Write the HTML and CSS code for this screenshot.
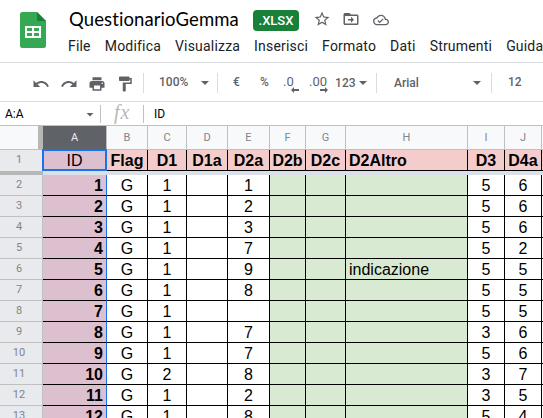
FILE: index.html
```
<!DOCTYPE html>
<html lang="it">
<head>
<meta charset="utf-8">
<title>QuestionarioGemma</title>
<link rel="stylesheet" href="styles.css">
</head>
<body>
<header class="top">
  <svg class="logo" width="26" height="36" viewBox="0 0 26 36"><path d="M2.500 0H17l9 9v24.500a2.500 2.500 0 0 1-2.500 2.500h-21A2.500 2.500 0 0 1 0 33.500v-31A2.500 2.500 0 0 1 2.500 0z" fill="#34a853"/><path d="M17 0l9 9h-9z" fill="#188038"/><path fill-rule="evenodd" fill="#fff" d="M5 14h16v12H5zM7 16v3h5v-3zM14 16v3h5v-3zM7 21v3h5v-3zM14 21v3h5v-3z"/></svg>
  <div class="head">
    <div class="titlebar">
      <span class="title">QuestionarioGemma</span>
      <span class="badge">.XLSX</span>
      <svg class="ic star" width="18" height="18" viewBox="0 0 24 24"><path d="M22 9.240l-7.190-.62L12 2 9.190 8.630 2 9.240l5.460 4.730L5.820 21 12 17.270 18.180 21l-1.630-7.030L22 9.240zM12 15.400l-3.760 2.270 1-4.280-3.320-2.880 4.380-.38L12 6.100l1.710 4.040 4.380.38-3.320 2.880 1 4.280L12 15.400z"/></svg>
      <svg class="ic move" width="18" height="18" viewBox="0 0 24 24"><path d="M20 6h-8l-2-2H4c-1.100 0-2 .9-2 2v12c0 1.100.9 2 2 2h16c1.100 0 2-.9 2-2V8c0-1.100-.9-2-2-2zm0 12H4V8h16v10zm-8-1l4-4-4-4v3H8v2h4z"/></svg>
      <svg class="ic cloud" width="16" height="16" viewBox="0 0 24 24"><path d="M19.350 10.040C18.670 6.590 15.640 4 12 4 9.110 4 6.600 5.640 5.350 8.040 2.340 8.360 0 10.910 0 14c0 3.310 2.690 6 6 6h13c2.760 0 5-2.240 5-5 0-2.640-2.050-4.780-4.650-4.960zM19 18H6c-2.210 0-4-1.790-4-4 0-2.050 1.530-3.760 3.560-3.970l1.070-.11.5-.95C8.080 7.140 9.940 6 12 6c2.620 0 4.880 1.860 5.390 4.430l.3 1.500 1.530.11c1.560.1 2.780 1.410 2.780 2.960 0 1.650-1.350 3-3 3zm-9-3.820l-2.090-2.090L6.500 13.500 10 17l6.010-6.010-1.410-1.410z"/></svg>
    </div>
    <nav class="menu"><span>File</span><span>Modifica</span><span>Visualizza</span><span>Inserisci</span><span>Formato</span><span>Dati</span><span>Strumenti</span><span>Guida</span></nav>
  </div>
</header>
<div class="toolbar">
  <svg class="ic undo" width="18" height="18" viewBox="0 0 24 24"><path d="M12.500 8c-2.650 0-5.050.99-6.900 2.600L2 7v9h9l-3.620-3.620c1.390-1.160 3.160-1.880 5.120-1.880 3.540 0 6.550 2.310 7.600 5.500l2.370-.78C21.080 11.030 17.150 8 12.500 8z"/></svg>
  <svg class="ic redo" width="18" height="18" viewBox="0 0 24 24"><path d="M18.400 10.600C16.550 8.990 14.150 8 11.500 8c-4.650 0-8.580 3.030-9.960 7.220L3.900 16c1.050-3.190 4.050-5.500 7.600-5.500 1.950 0 3.730.72 5.120 1.880L13 16h9V7l-3.600 3.600z"/></svg>
  <svg class="ic print" width="18" height="18" viewBox="0 0 24 24"><path d="M19 8H5c-1.660 0-3 1.340-3 3v6h4v4h12v-4h4v-6c0-1.660-1.340-3-3-3zm-3 11H8v-5h8v5zm3-7c-.55 0-1-.45-1-1s.45-1 1-1 1 .45 1 1-.45 1-1 1zm-1-9H6v4h12V3z"/></svg>
  <svg class="ic paint" width="18" height="18" viewBox="0 0 24 24"><path d="M18 4V3c0-.55-.45-1-1-1H5c-.55 0-1 .45-1 1v4c0 .55.45 1 1 1h12c.55 0 1-.45 1-1V6h1v4H9v11c0 .55.45 1 1 1h2c.55 0 1-.45 1-1v-9h8V4h-3z"/></svg>
  <i class="sep s1"></i>
  <span class="zoom">100%</span><i class="caret c1"></i>
  <i class="sep s2"></i>
  <span class="euro">€</span><span class="pct">%</span>
  <span class="dec d1">.0<svg width="8" height="6" viewBox="0 0 8 6"><path d="M0 3l3-3v2h5v2H3v2z"/></svg></span>
  <span class="dec d2">.00<svg width="8" height="6" viewBox="0 0 8 6"><path d="M8 3L5 0v2H0v2h5v2z"/></svg></span>
  <span class="num">123</span><i class="caret"></i>
  <i class="sep s3"></i>
  <span class="font">Arial</span><i class="caret c3"></i>
  <i class="sep s4"></i>
  <span class="size">12</span>
</div>
<div class="formula">
  <span class="range">A:A</span><i class="caret"></i><i class="fsep"></i><span class="fx">fx</span><i class="fsep short"></i><span class="value">ID</span>
</div>
<main class="sheet" id="sheet"></main>
<script src="sheet.js"></script>
</body>
</html>
```
FILE: styles.css
```
* { box-sizing: border-box; }
html, body { margin: 0; height: 100%; overflow: hidden; }
body { background: #fff; font-family: Roboto, sans-serif; color: #202124; }
.ic { fill: #5f6368; flex: none; display: block; }

.top { display: flex; height: 62px; padding: 12px 0 0 20px; }
.logo { flex: none; }
.head { margin: -4px 0 0 22px; flex: none; }
.titlebar { display: flex; align-items: center; height: 24px; }
.title { font: 18.500px/24px Lato, sans-serif; color: #000; width: 185px; margin-top: -2px; padding-left: 1px; letter-spacing: .1px; white-space: nowrap; }
.badge { width: 46px; height: 21px; margin-top: 1px; border-radius: 4px; background: #188038; color: #fff; font: 500 13px/22px Roboto, sans-serif; text-align: center; }
.star { margin: -2px 0 0 14px; }
.move { margin: -2px 0 0 11px; }
.cloud { margin: -1px 0 0 13px; }
.menu { display: flex; gap: 14px; font-size: 14px; line-height: 20px; margin-top: 4px; letter-spacing: .19px; white-space: nowrap; }

.toolbar { display: flex; align-items: center; height: 39px; border-top: 1px solid #dadce0; padding-left: 32px; font-size: 12px; font-weight: 500; color: #5f6368; white-space: nowrap; }
.toolbar > * { flex: none; }
.toolbar .ic { margin-top: 3px; }
.redo, .print, .paint { margin-left: 10px; }
.sep { width: 1px; height: 20px; margin-top: 1px; background: #dadce0; }
.s1 { margin-left: 9px; }
.zoom { width: 42px; margin-left: 15px; }
.caret { width: 8px; height: 4px; margin-top: 2px; background: #5f6368; clip-path: polygon(0 0, 100% 0, 50% 100%); }
.s2 { margin-left: 8px; }
.euro { width: 27px; margin-left: 15px; }
.pct { width: 23px; }
.dec { position: relative; font-size: 13px; font-weight: 400; line-height: 16px; width: 27px; }
.dec svg { position: absolute; left: 8px; top: 13px; fill: #5f6368; }
.d2 svg { left: 11px; }
.num { width: 23px; margin: 1px 0 0 -1px; letter-spacing: .1px; }
.s3 { margin-left: 9px; }
.font { width: 79px; margin: 1px 0 0 17px; }
.s4 { margin-left: 10px; }
.size { margin-left: 16px; }
.dec.d2 { margin-left: -1px; }
.num + .caret { margin-left: 1px; }

.formula { display: flex; align-items: center; height: 24px; border-top: 1px solid #dadce0; padding-left: 5px; font-size: 12px; color: #000; }
.range { width: 81px; }
.fsep { width: 1px; height: 18px; background: #c0c0c0; margin-left: 6px; }
.fx { font: italic 20px/20px "Liberation Serif", serif; color: #b8b8b8; width: 30px; margin: -3px 0 0 13px; letter-spacing: 1px; }
.fsep.short { margin-left: -1px; }
.value { margin-left: 10px; }

.sheet { width: 570px; }
.row { display: grid; grid-template-rows: 100%; grid-template-columns: 43px 64px 41px 39px 41px 42px 36px 40px 122px 37px 37px 28px; height: 21px; }
.row > * { border-right: 1px solid #000; border-bottom: 1px solid #000; font: 16px/22px "Liberation Sans", Arial, sans-serif; color: #000; text-align: center; overflow: hidden; white-space: nowrap; }
.row > .rh { background: #e8eaed; border-color: #c0c0c0; color: #80868b; font: 11px/20px Roboto, sans-serif; padding-right: 4px; }
.row > .a { background: #ddc0cf; border-right-color: #1a73e8; text-align: right; font-weight: bold; padding-right: 3px; }
.row > .green { background: #d9ead3; }
.row > .h { text-align: left; padding-left: 3px; }
.row.letters { height: 25px; border-top: 1px solid #c0c0c0; }
.row.letters > * { background: #f8f9fa; border-color: #c0c0c0; font: 11px/24px Roboto, sans-serif; color: #80868b; }
.row.letters > .corner { border-right: 5px solid #b7b7b7; }
.row.letters > .sel { background: #5f6368; color: #e8eaed; }
.row.first > * { background: #f4cccc; font-weight: bold; }
.row.first > .rh { background: #e8eaed; border-bottom: 0; font-weight: 400; }
.row.first > .a { background: #ddc0cf; box-shadow: 0 -1px #1a73e8, -1px 0 #1a73e8, -1px -1px #1a73e8, inset 0 0 0 1px #1a73e8; border-color: #1a73e8; font-weight: normal; text-align: center; padding: 0; }
.freeze { display: flex; height: 4px; background: #dadfe8; }
.freeze i { width: 43px; background: #b7b7b7; }
```
FILE: sheet.js
```
const letters = ["A", "B", "C", "D", "E", "F", "G", "H", "I", "J", ""];
const titles = ["ID", "Flag", "D1", "D1a", "D2a", "D2b", "D2c", "D2Altro", "D3", "D4a", ""];
// D1, D2a, D2Altro, D3, D4a
const data = [
  [1, 1, "", 5, 6], [1, 2, "", 5, 6], [1, 3, "", 5, 6], [1, 7, "", 5, 2],
  [1, 9, "indicazione", 5, 5], [1, 8, "", 5, 5], [1, "", "", 5, 5], [1, 7, "", 3, 6],
  [1, 7, "", 5, 6], [2, 8, "", 3, 7], [1, 2, "", 3, 5], [1, 8, "", 5, 4]
];
const kinds = ["a", "", "", "", "", "green", "green", "green h", "", "", ""];
const cell = (text, cls) => `<div class="${cls}">${text}</div>`;
const row = (n, values, extra = "") =>
  `<div class="row ${extra}">${cell(n, "rh")}${values.map((v, i) => cell(v, extra ? kinds[i].replace("green", "") : kinds[i])).join("")}</div>`;

document.getElementById("sheet").innerHTML =
  `<div class="row letters">${cell("", "corner")}${letters.map((l, i) => cell(l, i ? "" : "sel")).join("")}</div>` +
  row(1, titles, "first") +
  `<div class="freeze"><i></i></div>` +
  data.map((d, i) => row(i + 2, [i + 1, "G", d[0], "", d[1], "", "", d[2], d[3], d[4], ""])).join("");
```
